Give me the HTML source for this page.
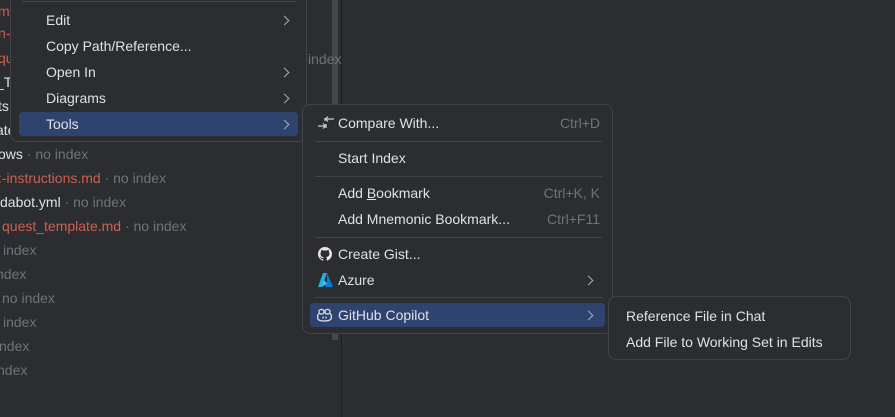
<!DOCTYPE html>
<html><head><style>
*{margin:0;padding:0;box-sizing:border-box}
body{width:895px;height:417px;background:#2b2d30;position:relative;overflow:hidden;font-family:"Liberation Sans",sans-serif;font-size:14px;color:#dfe1e5}
.t{position:absolute;white-space:nowrap;line-height:16px}
.r{color:#d0604f}.g{color:#6f737a}
.menu{position:absolute;background:#2b2d30;border:1px solid #43454a;border-radius:8px}
.it{position:absolute;left:0;right:0;height:24px;line-height:24px;white-space:nowrap}
.sel{background:#2e436e;border-radius:4px}
.sep{position:absolute;height:1px;background:#43454a}
.arr{position:absolute;width:7px;height:7px;border-right:1.3px solid #a8abb0;border-top:1.3px solid #a8abb0;transform:rotate(45deg)}
.sc{position:absolute;color:#6f737a;right:12px}
</style></head><body>
<div style="position:absolute;left:332px;top:0;width:6px;height:340px;background:#45474b"></div>
<div style="position:absolute;left:341px;top:0;width:1px;height:417px;background:#1e1f22"></div>
<div class="t r" style="left:-2px;top:3px">m</div>
<div class="t r" style="left:-2px;top:25px">n-</div>
<div class="t r" style="left:-2px;top:50px">qu</div>
<div class="t" style="left:-4px;top:74px">_T</div>
<div class="t" style="left:-2px;top:98px">ts</div>
<div class="t" style="left:-4px;top:122px">ate</div>
<div class="t" style="left:308px;top:51px"><span class="g">index</span></div>
<div class="t" style="left:-2px;top:146px">ows <span class="g">· no index</span></div>
<div class="t" style="left:-2px;top:170px"><span class="r">:-instructions.md</span> <span class="g">· no index</span></div>
<div class="t" style="left:0px;top:194px">dabot.yml <span class="g">· no index</span></div>
<div class="t" style="left:2px;top:218px"><span class="r">quest_template.md</span> <span class="g">· no index</span></div>
<div class="t g" style="left:3px;top:242px">index</div>
<div class="t g" style="left:-4px;top:266px">ndex</div>
<div class="t g" style="left:2px;top:290px">no index</div>
<div class="t g" style="left:3px;top:314px">index</div>
<div class="t g" style="left:-1px;top:338px">ndex</div>
<div class="t g" style="left:-3px;top:362px">ndex</div>

<div class="menu" style="left:10px;top:-10px;width:297px;height:152px">
<div class="sep" style="left:11px;right:10px;top:10px"></div>
<div class="it" style="top:17px;padding-left:35px">Edit<span class="arr" style="left:270px;top:9px"></span></div>
<div class="it" style="top:43px;padding-left:35px">Copy Path/Reference...</div>
<div class="it" style="top:69px;padding-left:35px">Open In<span class="arr" style="left:270px;top:9px"></span></div>
<div class="it" style="top:95px;padding-left:35px">Diagrams<span class="arr" style="left:270px;top:9px"></span></div>
<div class="it sel" style="top:121px;left:8px;right:8px;padding-left:27px">Tools<span class="arr" style="left:262px;top:9px"></span></div>
</div>

<div class="menu" style="left:302px;top:104px;width:311px;height:230px">
<div class="it" style="top:6px;padding-left:35px"><svg style="position:absolute;left:14px;top:4px" width="18" height="16" viewBox="0 0 18 16" fill="none" stroke="#ced0d6" stroke-width="1.2"><path d="M17 4H9M11 1.5 8.5 4 11 6.5M8 3v3"/><path d="M1 11h8M6 8.5 8.5 11 6 13.5M9 9v4"/></svg>Compare With...<span class="sc">Ctrl+D</span></div>
<div class="sep" style="left:12px;right:10px;top:36px"></div>
<div class="it" style="top:41px;padding-left:35px">Start Index</div>
<div class="sep" style="left:12px;right:10px;top:71px"></div>
<div class="it" style="top:76px;padding-left:35px">Add <u>B</u>ookmark<span class="sc">Ctrl+K, K</span></div>
<div class="it" style="top:102px;padding-left:35px">Add Mnemonic Bookmark...<span class="sc">Ctrl+F11</span></div>
<div class="sep" style="left:12px;right:10px;top:132px"></div>
<div class="it" style="top:137px;padding-left:35px"><svg style="position:absolute;left:15px;top:5px" width="14" height="14" viewBox="0 0 16 16"><path fill="#e6e6e6" d="M8 0C3.6 0 0 3.6 0 8c0 3.5 2.3 6.5 5.5 7.6.4.1.5-.2.5-.4v-1.4c-2.2.5-2.7-1-2.7-1-.4-.9-.9-1.2-.9-1.2-.7-.5.1-.5.1-.5.8.1 1.2.8 1.2.8.7 1.2 1.9.9 2.3.7.1-.5.3-.9.5-1.1-1.8-.2-3.6-.9-3.6-4 0-.9.3-1.6.8-2.1-.1-.2-.4-1 .1-2.1 0 0 .7-.2 2.2.8.6-.2 1.3-.3 2-.3s1.4.1 2 .3c1.5-1 2.2-.8 2.2-.8.4 1.1.2 1.9.1 2.1.5.6.8 1.3.8 2.1 0 3.1-1.9 3.7-3.6 3.9.3.3.5.8.5 1.5v2.2c0 .2.1.5.6.4C13.7 14.5 16 11.5 16 8c0-4.4-3.6-8-8-8z"/></svg>Create Gist...</div>
<div class="it" style="top:163px;padding-left:35px"><svg style="position:absolute;left:15px;top:5px" width="15" height="14" viewBox="0 0 15 14"><path fill="#1fb0e8" d="M5 0h4L4 14H0z"/><path fill="#0a7fd0" d="M9 0l6 14H8L6.5 10 9 9z"/><path fill="#35c5f5" d="M6 7l3 3.5L4 14z"/></svg>Azure<span class="arr" style="left:282px;top:9px"></span></div>
<div class="sep" style="left:12px;right:10px;top:192px"></div>
<div class="it sel" style="top:198px;left:7px;right:7px;padding-left:28px"><svg style="position:absolute;left:7px;top:5px" width="15" height="14" viewBox="0 0 15 14" fill="none" stroke="#dfe1e5" stroke-width="1.3"><path d="M2 6c-1 0-1.3 1-1.3 2v2c0 2 3 3 6.8 3s6.8-1 6.8-3V8c0-1-.3-2-1.3-2"/><rect x="2" y="1.5" width="5" height="4.5" rx="2"/><rect x="8" y="1.5" width="5" height="4.5" rx="2"/><path d="M6 8.5v2M9 8.5v2"/></svg>GitHub Copilot<span class="arr" style="left:275px;top:9px"></span></div>
</div>

<div class="menu" style="left:608px;top:296px;width:243px;height:64px">
<div class="it" style="top:7px;padding-left:17px">Reference File in Chat</div>
<div class="it" style="top:33px;padding-left:17px">Add File to Working Set in Edits</div>
</div>
</body></html>
